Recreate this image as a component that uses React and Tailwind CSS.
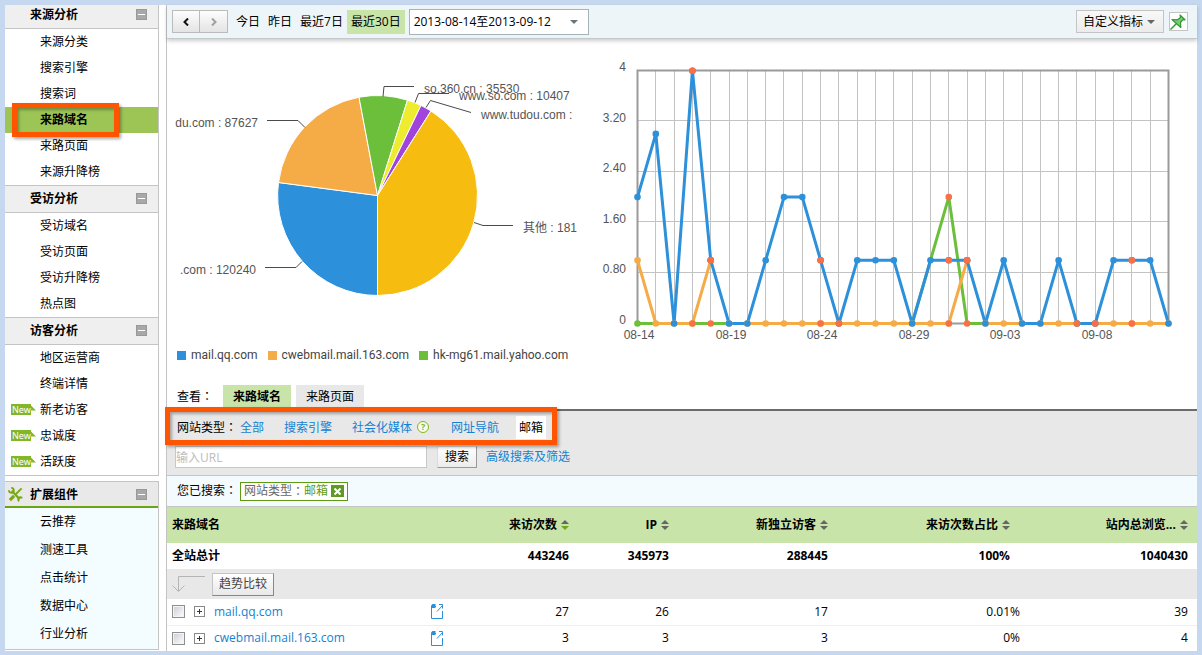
import React from "react";

const COLORS = { blue: "#2d90da", orange: "#f5ab46", green: "#6bbf3b", red: "#f96f46" };

const SIDEBAR = [
  { title: "来源分析", items: ["来源分类", "搜索引擎", "搜索词", "来路域名", "来路页面", "来源升降榜"] },
  { title: "受访分析", items: ["受访域名", "受访页面", "受访升降榜", "热点图"] },
  { title: "访客分析", items: ["地区运营商", "终端详情", "新老访客", "忠诚度", "活跃度"] },
];
const FRESH = ["新老访客", "忠诚度", "活跃度"];
const EXTENSIONS = ["云推荐", "测速工具", "点击统计", "数据中心", "行业分析"];

function Colon() {
  return <span className="font-['Noto_Sans_CJK_TC',sans-serif] leading-none">：</span>;
}

function CollapseButton({ label }) {
  return (
    <button type="button" aria-label={`收起${label}`} className="mr-[11px] flex h-[11px] w-[11px] items-center justify-center border border-[#999] bg-[#a8a8a8]">
      <span className="h-px w-[7px] bg-white" />
    </button>
  );
}

function NewBadge() {
  return (
    <span className="absolute left-[6px] top-[7px] h-[11px] w-[25px]">
      <svg viewBox="0 0 25 11" className="absolute inset-0 h-[11px] w-[25px]" aria-hidden="true">
        <path d="M0 0H20V1.500L25 6.500H20V11H0Z" fill="#84b62a" />
      </svg>
      <span className="relative block pl-px font-['Noto_Sans',sans-serif] text-[9px] leading-[11px] text-white">New</span>
    </span>
  );
}

function Highlight({ className }) {
  return (
    <div
      aria-hidden="true"
      className={`pointer-events-none absolute z-10 border-[5px] border-[#ff5500] shadow-[2px_2px_3px_rgba(0,0,0,0.35),inset_2px_2px_3px_rgba(0,0,0,0.3)] ${className}`}
    />
  );
}

function MenuItem({ name }) {
  const active = name === "来路域名";
  return (
    <li className={`relative h-[26px] ${active ? "bg-[#9dc556] font-bold" : ""}`}>
      <a href="#" className="block pl-[35px] leading-[26px]">{name}</a>
      {FRESH.includes(name) && <NewBadge />}
      {active && <Highlight className="-top-1 left-[7px] h-[34px] w-[107px]" />}
    </li>
  );
}

function Sidebar() {
  return (
    <nav className="w-[154px] shrink-0">
      <div className="border-b border-r border-[#c4c4c4]">
        {SIDEBAR.map((group, i) => (
          <section key={group.title}>
            <h2
              className={`flex items-center justify-between border-b border-[#c4c4c4] bg-[#efefef] pl-[25px] font-bold ${
                i === 0 ? "h-6 pb-1" : "h-7 border-t pb-px"
              }`}
            >
              {group.title}
              <CollapseButton label={group.title} />
            </h2>
            <ul>{group.items.map((name) => <MenuItem key={name} name={name} />)}</ul>
          </section>
        ))}
      </div>
      <div className="mt-[5px] border border-l-0 border-[#c4c4c4] bg-[#f3fcff]">
        <h2 className="flex h-[26px] items-center border-b-2 border-[#6aa514] bg-[#e9e9e9] pt-px font-bold">
          <svg viewBox="0 0 16 16" className="ml-[3px] mr-[7px] h-[15px] w-[15px]" fill="none" stroke="#78a912" aria-hidden="true">
            <path d="M4 4L12.5 13" strokeWidth="2.4" />
            <path d="M3.4 1A2.6 2.6 0 1 1 1 3.5" strokeWidth="2" />
            <path d="M12 15A2.2 2.2 0 1 1 15 12" strokeWidth="2" />
            <path d="M14.5 1.5L8.5 7.5" strokeWidth="2" />
            <path d="M6.5 9.5L2 14" strokeWidth="3.4" />
          </svg>
          <span className="grow">扩展组件</span>
          <CollapseButton label="扩展组件" />
        </h2>
        <ul className="pb-px">
          {EXTENSIONS.map((name) => (
            <li key={name}><a href="#" className="block pl-[35px] leading-7">{name}</a></li>
          ))}
        </ul>
      </div>
    </nav>
  );
}

function Toolbar() {
  return (
    <header className="flex h-[34px] items-center border-b border-[#c3c8ca] bg-[#edf5f8] pl-[5px] pr-[9px] shadow-[0_2px_4px_rgba(0,0,0,0.2)]">
      <div className="flex h-[23px] border border-[#bbbbbb] bg-linear-to-b from-[#fdfdfd] to-[#e4e4e4]">
        <button type="button" aria-label="前一段" className="flex w-[27px] items-center justify-center border-r border-[#bbbbbb]">
          <svg viewBox="0 0 6 8" className="h-2 w-[6px]" fill="none" stroke="#111" strokeWidth="2" aria-hidden="true"><path d="M5 0.5L1.5 4L5 7.5" /></svg>
        </button>
        <button type="button" aria-label="后一段" className="flex w-[27px] items-center justify-center">
          <svg viewBox="0 0 6 8" className="h-2 w-[6px]" fill="none" stroke="#a0a0a0" strokeWidth="2" aria-hidden="true"><path d="M1 0.5L4.5 4L1 7.5" /></svg>
        </button>
      </div>
      <div className="ml-1 flex leading-[24px]">
        <button type="button" className="px-1">今日</button>
        <button type="button" className="px-1">昨日</button>
        <button type="button" className="px-1">最近7日</button>
        <button type="button" className="bg-[#c9e4a9] px-1">最近30日</button>
      </div>
      <button type="button" className="ml-1 flex h-[26px] w-[180px] items-center justify-between border border-[#a5b4ba] bg-white pl-1 pr-[10px] text-left">
        2013-08-14至2013-09-12
        <svg viewBox="0 0 8 4" className="h-1 w-2" aria-hidden="true"><path d="M0 0H8L4 4Z" fill="#66767b" /></svg>
      </button>
      <button type="button" className="ml-auto flex h-[23px] items-center gap-1 border border-[#c4c4c4] bg-linear-to-b from-[#f8f8f8] to-[#ececec] pl-[6px] pr-2">
        自定义指标
        <svg viewBox="0 0 8 4" className="h-1 w-2" aria-hidden="true"><path d="M0 0H8L4 4Z" fill="#666" /></svg>
      </button>
      <button type="button" aria-label="固定" className="ml-[5px] flex h-[19px] w-[19px] items-center justify-center border border-[#c4c4c4] bg-white">
        <svg viewBox="0 0 16 16" className="h-4 w-4" aria-hidden="true">
          <path d="M0.500 15.500L6.500 9.500" stroke="#2f9a35" strokeWidth="1.4" />
          <path d="M2 5.500L7.500 5.800L10.500 3.500L10 1L15 5.800L12.700 5.800L10.500 8.500L10.800 13.500Z" fill="#7ccb74" stroke="#2f9a35" strokeWidth="1.2" strokeLinejoin="round" />
        </svg>
      </button>
    </header>
  );
}

const SLICES = [
  ["M200 150L200 250A100 100 0 0 1 101 137Z", COLORS.blue],
  ["M200 150L101 137A100 100 0 0 1 181.500 51.700Z", COLORS.orange],
  ["M200 150L181.500 51.700A100 100 0 0 1 230 54.700Z", COLORS.green],
  ["M200 150L230 54.700A100 100 0 0 1 243.500 60Z", "#eeec2e"],
  ["M200 150L243.500 60A100 100 0 0 1 253.500 65.500Z", "#a044dc"],
  ["M200 150L253.500 65.500A100 100 0 0 1 200 250Z", "#f6bd10"],
];

function PieChart() {
  return (
    <figure className="ml-[10px] w-[410px] shrink-0 pt-[6px]">
      <svg viewBox="0 0 400 290" className="h-[290px] w-[400px] overflow-visible font-['Liberation_Sans','Noto_Sans_CJK_SC',sans-serif] text-[12px]" role="img" aria-label="来路域名占比">
        <g transform="translate(0.5 0.5)">
          {SLICES.map(([d, fill]) => <path key={fill} d={d} fill={fill} stroke="#fff" strokeLinejoin="round" />)}
        </g>
        <g fill="none" stroke="#4a4a4a">
          <path d="M90 75.500H121L128 82.500" />
          <path d="M206 51.500L207 41.500H237" />
          <path d="M238 57.500L241.500 48.500H272" />
          <path d="M249 62.500L253.500 55.500L294 67.500" />
          <path d="M297 177.500L306 180.500H336" />
          <path d="M88 222.500H119L125 216.500" />
        </g>
        <g fill="#555">
          <text x="81" y="82" textAnchor="end">du.com : 87627</text>
          <text x="247" y="48">so.360.cn : 35530</text>
          <text x="282" y="55">www.so.com : 10407</text>
          <text x="304" y="74">www.tudou.com :</text>
          <text x="346" y="187">其他 : 181</text>
          <text x="79" y="229" textAnchor="end">.com : 120240</text>
        </g>
      </svg>
      <figcaption className="mt-3 flex gap-[10px] font-['Roboto',sans-serif] text-[12px] leading-4 text-[#444]">
        {[["mail.qq.com", "bg-[#2d90da]"], ["cwebmail.mail.163.com", "bg-[#f5ab46]"], ["hk-mg61.mail.yahoo.com", "bg-[#6bbf3b]"]].map(([name, bg]) => (
          <span key={name} className="flex items-center gap-[5px] whitespace-nowrap">
            <i className={`h-[9px] w-[9px] ${bg}`} />
            {name}
          </span>
        ))}
      </figcaption>
    </figure>
  );
}

const BLUE = [2, 3, 0, 4, 1, 0, 0, 1, 2, 2, 1, 0, 1, 1, 1, 0, 1, 1, 1, 0, 1, 0, 0, 1, 0, 0, 1, 1, 1, 0];
const ORANGE = BLUE.map((_, i) => ([0, 4, 18].includes(i) ? 1 : 0));
const GREEN = BLUE.map((_, i) => (i === 16 ? 1 : i === 17 ? 2 : 0));
const RED = [[3, 4], [4, 1], [3, 0], [4, 0], [10, 1], [10, 0], [11, 0], [17, 2], [17, 1], [17, 0], [18, 1], [18, 0], [24, 0], [25, 0], [27, 1], [27, 0]];
const px = (i) => 50.5 + i * 18.31;
const py = (v) => 273.5 - v * 63.2;
const line = (data) => data.map((v, i) => `${px(i)},${py(v)}`).join(" ");

/* Zero-level stretches drawn per day range, so that each shows its own series colour. */
const ORANGE_PARTS = [[0, 3], [3, 4], [6, 17], [17, 18], [19, 29]];
const GREEN_PARTS = [[0, 1], [3, 5], [15, 19]];

function Series({ data, parts, color }) {
  return (
    <g fill={color}>
      {parts.map(([a, b]) => (
        <polyline key={a} points={data.slice(a, b + 1).map((v, k) => `${px(a + k)},${py(v)}`).join(" ")} fill="none" stroke={color} strokeWidth="3" />
      ))}
    </g>
  );
}

function LineChart() {
  return (
    <figure className="min-w-0 grow">
      <svg viewBox="0 0 600 310" className="h-[310px] w-[600px] font-['Liberation_Sans',sans-serif] text-[12px]" role="img" aria-label="来访次数趋势">
        <g stroke="#c3c3c3" shapeRendering="crispEdges">
          {[1, 2, 3, 4].map((n) => <path key={n} d={`M50.5 ${20.5 + Math.floor(n * 50.6)}H581.5`} />)}
          {BLUE.slice(1, -1).map((_, i) => <path key={i} d={`M${px(i + 1)} 20.5V273.5`} />)}
        </g>
        <rect x="50.5" y="20.5" width="531" height="253" fill="none" stroke="#9a9a9a" strokeWidth="2" />
        <Series data={GREEN} parts={GREEN_PARTS} color={COLORS.green} />
        <Series data={ORANGE} parts={ORANGE_PARTS} color={COLORS.orange} />
        <polyline points={line(BLUE)} fill="none" stroke={COLORS.blue} strokeWidth="3" strokeLinejoin="round" />
        {ORANGE.map((v, i) => <circle key={i} cx={px(i)} cy={py(v)} r="3.3" fill={i === 0 || v === 0 ? COLORS.orange : COLORS.red} />)}
        <circle cx={px(0)} cy={py(0)} r="3.3" fill={COLORS.green} />
        {BLUE.map((v, i) => <circle key={i} cx={px(i)} cy={py(v)} r="3.3" fill={COLORS.blue} />)}
        {RED.map(([i, v]) => <circle key={`${i}-${v}`} cx={px(i)} cy={py(v)} r="3.3" fill={COLORS.red} />)}
        <g fill="#555">
          {["4", "3.20", "2.40", "1.60", "0.80", "0"].map((t, i) => (
            <text key={t} x="39" y={21 + Math.round(i * 50.6)} textAnchor="end">{t}</text>
          ))}
          {["08-14", "08-19", "08-24", "08-29", "09-03", "09-08"].map((t, i) => (
            <text key={t} x={52 + Math.round(i * 91.6)} y="289" textAnchor="middle">{t}</text>
          ))}
        </g>
      </svg>
    </figure>
  );
}

const LINK = "text-[#1482d2]";

function Filters() {
  return (
    <>
      <div className="flex items-end border-b-2 border-[#6b6b6b] pl-[10px] leading-6">
        <span className="w-[46px] shrink-0">查看<Colon /></span>
        <button type="button" className="bg-[#c9e4a9] px-[10px] font-bold">来路域名</button>
        <button type="button" className="ml-[5px] bg-[#e8e8e8] px-[10px]">来路页面</button>
      </div>
      <div className="relative border-b border-[#c4c4c4] bg-[#e8e8e8] pb-[7px] pl-2 pt-[5px]">
        <Highlight className="-left-[2px] -top-[4px] h-[38px] w-[392px]" />
        <div className="flex items-center pl-[2px] leading-[23px]">
          <span>网站类型<Colon /></span>
          <a href="#" className={`ml-[3px] ${LINK}`}>全部</a>
          <a href="#" className={`ml-5 ${LINK}`}>搜索引擎</a>
          <a href="#" className={`ml-5 ${LINK}`}>社会化媒体</a>
          <button type="button" aria-label="帮助" className="mb-[2px] ml-[5px] flex h-3 w-3 items-center justify-center rounded-full border border-[#7fb51c] bg-[#f8fbee] text-[9px] font-bold leading-[10px] text-[#7fb51c]">?</button>
          <a href="#" className={`ml-[22px] ${LINK}`}>网址导航</a>
          <a href="#" className="ml-[17px] bg-white px-[3px]">邮箱</a>
        </div>
        <form className="mt-[7px] flex items-center" onSubmit={(e) => e.preventDefault()}>
          <input type="text" aria-label="输入URL" placeholder="输入URL" className="h-[22px] w-[252px] border border-[#c8c8c8] bg-white placeholder:text-[#bdbdbd]" />
          <button type="submit" className="ml-[10px] h-[22px] border border-[#dcdcdc] border-b-[#999] border-r-[#999] bg-linear-to-b from-white to-[#ececec] px-[7px]">搜索</button>
          <a href="#" className={`ml-[9px] ${LINK}`}>高级搜索及筛选</a>
        </form>
      </div>
      <div className="flex h-[31px] items-center border-b border-[#c4c4c4] bg-[#f3fbff] pl-[10px]">
        <span className="w-[63px] shrink-0">您已搜索<Colon /></span>
        <span className="flex h-[19px] items-center border border-[#5f9a13] bg-white px-[3px] text-[#666]">
          网站类型<Colon /><b className="font-normal text-[#5f9a13]">邮箱</b>
          <button type="button" aria-label="移除" className="ml-[3px] flex h-3 w-[13px] items-center justify-center bg-[#5f9a27]">
            <svg viewBox="0 0 7 7" className="h-[7px] w-[7px]" stroke="#fff" strokeWidth="2" aria-hidden="true"><path d="M0.5 0.5L6.500 6.500M6.500 0.5L0.5 6.500" /></svg>
          </button>
        </span>
      </div>
    </>
  );
}

function SortButton({ label, active }) {
  return (
    <button type="button" className="inline-flex items-center gap-1 font-bold">
      {label}
      <svg viewBox="0 0 8 10" className="h-[10px] w-2" aria-hidden="true">
        <path d="M4 0L8 4H0Z" fill="#666" />
        <path d="M0 6H8L4 10Z" fill={active ? "#6ba81a" : "#666"} />
      </svg>
    </button>
  );
}

function DataRow({ name, values }) {
  return (
    <tr className="h-[26px] border-t border-[#eeeeee] first:border-t-0">
      <td className="pl-[5px] pr-[10px]">
        <div className="flex items-center">
          <input type="checkbox" aria-label={name} className="h-[13px] w-[13px] shrink-0 appearance-none border border-[#8f8f8f] bg-linear-to-br from-[#c9cdd2] to-white shadow-[inset_0_0_0_1px_#f4f4f4]" />
          <button type="button" aria-label={`展开${name}`} className="ml-[9px] flex h-[11px] w-[11px] shrink-0 items-center justify-center border border-[#888] bg-white">
            <svg viewBox="0 0 5 5" className="h-[5px] w-[5px]" stroke="#333" aria-hidden="true"><path d="M0 2.500H5M2.500 0V5" /></svg>
          </button>
          <a href="#" className={`ml-[9px] grow ${LINK}`}>{name}</a>
          <a href="#" aria-label={`打开${name}`}>
            <svg viewBox="0 0 13 15" className="h-[15px] w-[13px]" fill="none" stroke="#2b8fd9" aria-hidden="true">
              <path d="M5 2.500H0.500V14.500H11.500V7" />
              <path d="M0 4V1.500L1.500 0H4.500V4Z" fill="#2b8fd9" stroke="none" />
              <path d="M6 7.500L11.500 1.500M8 0.500H11.500V4.500" />
            </svg>
          </a>
        </div>
      </td>
      {values.map((v, i) => (
        <td key={i} className={`text-right ${i === 3 ? "pr-0" : "pr-[10px] last:pr-[9px]"}`}>{v}</td>
      ))}
    </tr>
  );
}

function DataTable() {
  return (
    <table className="w-full table-fixed">
      <colgroup>
        <col />
        <col className="w-[125px]" />
        <col className="w-[100px]" />
        <col className="w-[159px]" />
        <col className="w-[182px]" />
        <col className="w-[177px]" />
      </colgroup>
      <thead>
        <tr className="h-9 bg-[#c9e4a9]">
          <th className="pl-[5px] text-left">来路域名</th>
          {["来访次数", "IP", "新独立访客", "来访次数占比", "站内总浏览..."].map((t, i) => (
            <th key={t} className="pr-[10px] text-right last:pr-[9px]"><div className="flex justify-end"><SortButton label={t} active={i === 0} /></div></th>
          ))}
        </tr>
        <tr className="h-[26px]">
          <th className="pl-[5px] text-left">全站总计</th>
          {["443246", "345973", "288445", "100%", "1040430"].map((t) => <td key={t} className="pr-[10px] text-right font-bold last:pr-[9px]">{t}</td>)}
        </tr>
        <tr className="h-[30px] bg-[#e8e8e8]">
          <td colSpan={6} className="pl-[5px]">
            <div className="flex items-center">
              <svg viewBox="0 0 34 16" className="h-4 w-[34px]" fill="none" stroke="#b4b4b4" aria-hidden="true"><path d="M33 0.500H6.500V15M0.500 9.500L6.500 15.500L12.500 9.500" /></svg>
              <button type="button" className="ml-[6px] h-[23px] border border-[#c4c4c4] border-b-[#888] border-r-[#888] bg-linear-to-b from-white to-[#e8e8e8] px-[6px] text-[#444]">趋势比较</button>
            </div>
          </td>
        </tr>
      </thead>
      <tbody>
        <DataRow name="mail.qq.com" values={["27", "26", "17", "0.01%", "39"]} />
        <DataRow name="cwebmail.mail.163.com" values={["3", "3", "3", "0%", "4"]} />
      </tbody>
    </table>
  );
}

export default function App() {
  return (
    <div className="min-h-screen bg-[#c5d8f0] p-[5px] pb-1 font-['Open_Sans','Noto_Sans_CJK_SC',sans-serif] text-[12px] leading-[18px] text-black">
      <div className="flex gap-[7px] bg-white">
        <Sidebar />
        <main className="min-w-0 grow border-l border-[#c4c4c4]">
          <Toolbar />
          <section className="flex h-[346px] overflow-hidden">
            <PieChart />
            <div className="pt-[11px]"><LineChart /></div>
          </section>
          <Filters />
          <DataTable />
        </main>
      </div>
    </div>
  );
}
